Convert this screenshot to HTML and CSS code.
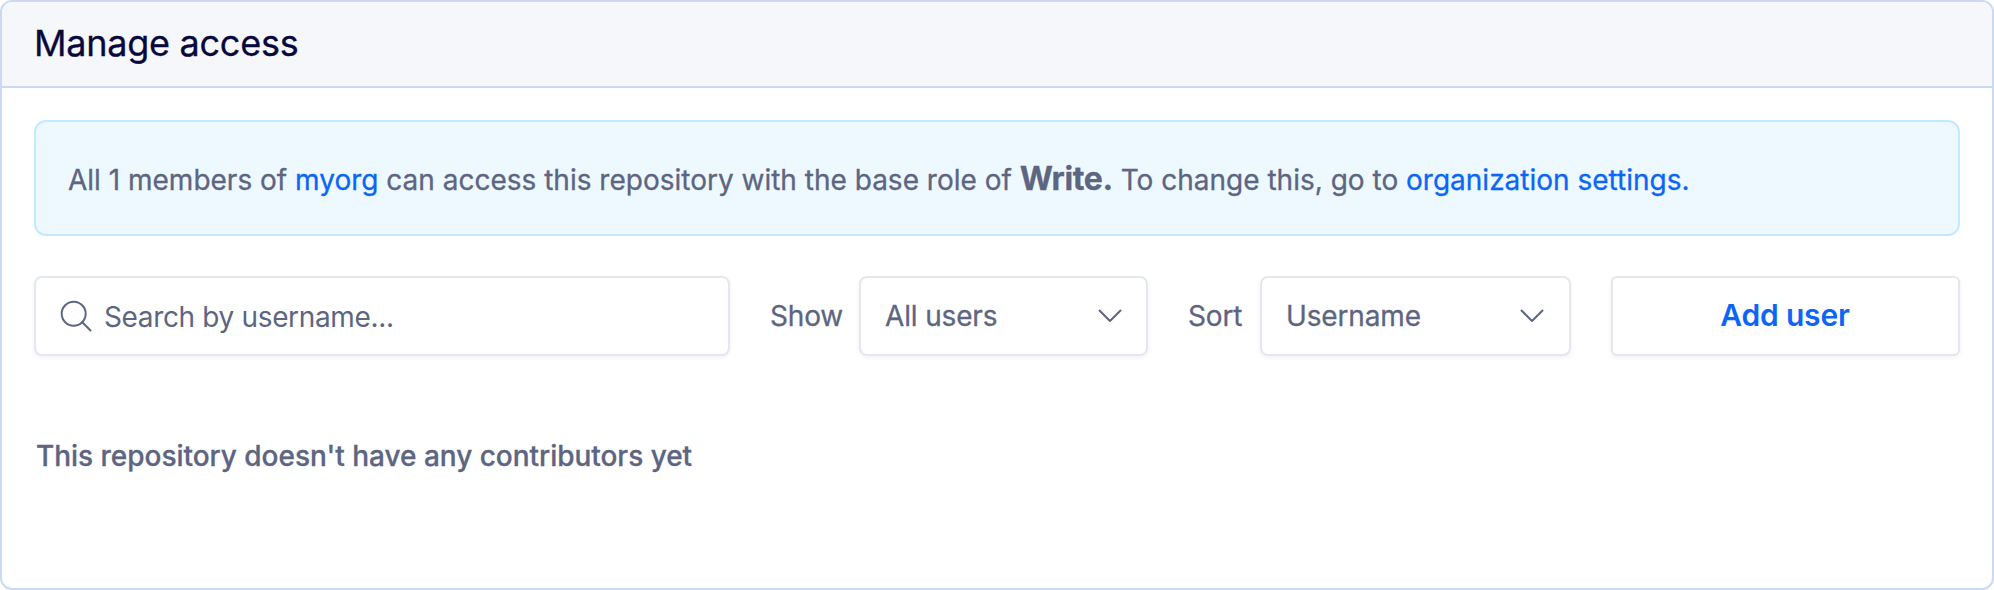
FILE: index.html
```html
<!DOCTYPE html>
<html lang="en">
<head>
<meta charset="utf-8">
<title>Manage access</title>
<link rel="stylesheet" href="styles.css">
</head>
<body>
<section class="panel">
  <header class="panel-header"><h1>Manage access</h1></header>
  <div class="panel-body">
    <div class="notice"><p>All 1 members of <a>myorg</a> can access this repository with the base role of <strong>Write.</strong> To change this, go to <a>organization settings.</a></p></div>
    <div class="toolbar">
      <div class="field search">
        <svg class="search-icon" viewBox="0 0 32 32"><circle cx="13.700" cy="13.700" r="12"/><path d="M22.300 22.300L30.500 30.500"/></svg>
        <span>Search by username...</span>
      </div>
      <span class="label show">Show</span>
      <div class="field select users"><span>All users</span><svg class="chevron" viewBox="0 0 24 14"><path d="M1.500 1.500L12 12L22.500 1.500"/></svg></div>
      <span class="label sort">Sort</span>
      <div class="field select order"><span>Username</span><svg class="chevron" viewBox="0 0 24 14"><path d="M1.500 1.500L12 12L22.500 1.500"/></svg></div>
      <button class="field add">Add user</button>
    </div>
    <p class="empty">This repository doesn't have any contributors yet</p>
  </div>
</section>
</body>
</html>
```
FILE: styles.css
```css
* { box-sizing: border-box; }
body { margin: 0; background: #fff; font-family: Inter, sans-serif; color: #5d6581; font-size: 28px; }
p, h1 { margin: 0; }
svg { fill: none; stroke: #5d6581; stroke-width: 2; stroke-linecap: round; stroke-linejoin: round; flex: none; }
.panel { height: 590px; border: 2px solid #cbdaf0; border-radius: 12px; overflow: hidden; }
.panel-header { height: 86px; padding: 0 32px 3px; display: flex; align-items: center; background: #f5f7fb; border-bottom: 2px solid #cbdaf0; }
h1 { font-size: 36px; line-height: 44px; font-weight: 400; letter-spacing: -.26px; color: #08083c; -webkit-text-stroke: .3px; }
.panel-body { padding: 32px; }
.notice { height: 116px; display: flex; align-items: center; padding: 0 32px; background: #edf9ff; border: 2px solid #c2e9ff; border-radius: 12px; white-space: nowrap; -webkit-text-stroke: .3px; }
a { color: #0c66f5; }
strong { font-size: 32px; font-weight: 700; letter-spacing: -.35px; }
.toolbar { display: flex; align-items: center; margin-top: 40px; }
.field { height: 80px; display: flex; align-items: center; background: #fff; border: 2px solid #e3e8ef; border-radius: 8px; box-shadow: 0 2px 4px rgba(30, 40, 80, .06); white-space: nowrap; }
.search { width: 696px; flex: none; padding: 0 24px; gap: 12px; letter-spacing: -.35px; }
.search span { padding-top: 2px; }
.search-icon { width: 32px; height: 32px; }
.label, .select { letter-spacing: -.15px; -webkit-text-stroke: .3px; }
.label { flex: none; }
.show { width: 73px; margin: 0 16px 0 40px; }
.sort { width: 56px; margin: 0 16px 0 40px; }
.select { flex: none; justify-content: space-between; padding: 0 24px 1px; }
.users { width: 289px; }
.order { width: 311px; padding-right: 25px; }
.chevron { width: 24px; height: 14px; }
.add { flex: 1; margin-left: 40px; padding: 0 1px 2px 0; justify-content: center; color: #0c66f5; font: 600 30px Inter, sans-serif; letter-spacing: -.2px; border-radius: 6px; }
.empty { margin: 82px 0 0 2px; font-weight: 500; line-height: 36px; letter-spacing: -.03px; -webkit-text-stroke: .3px; }
```
